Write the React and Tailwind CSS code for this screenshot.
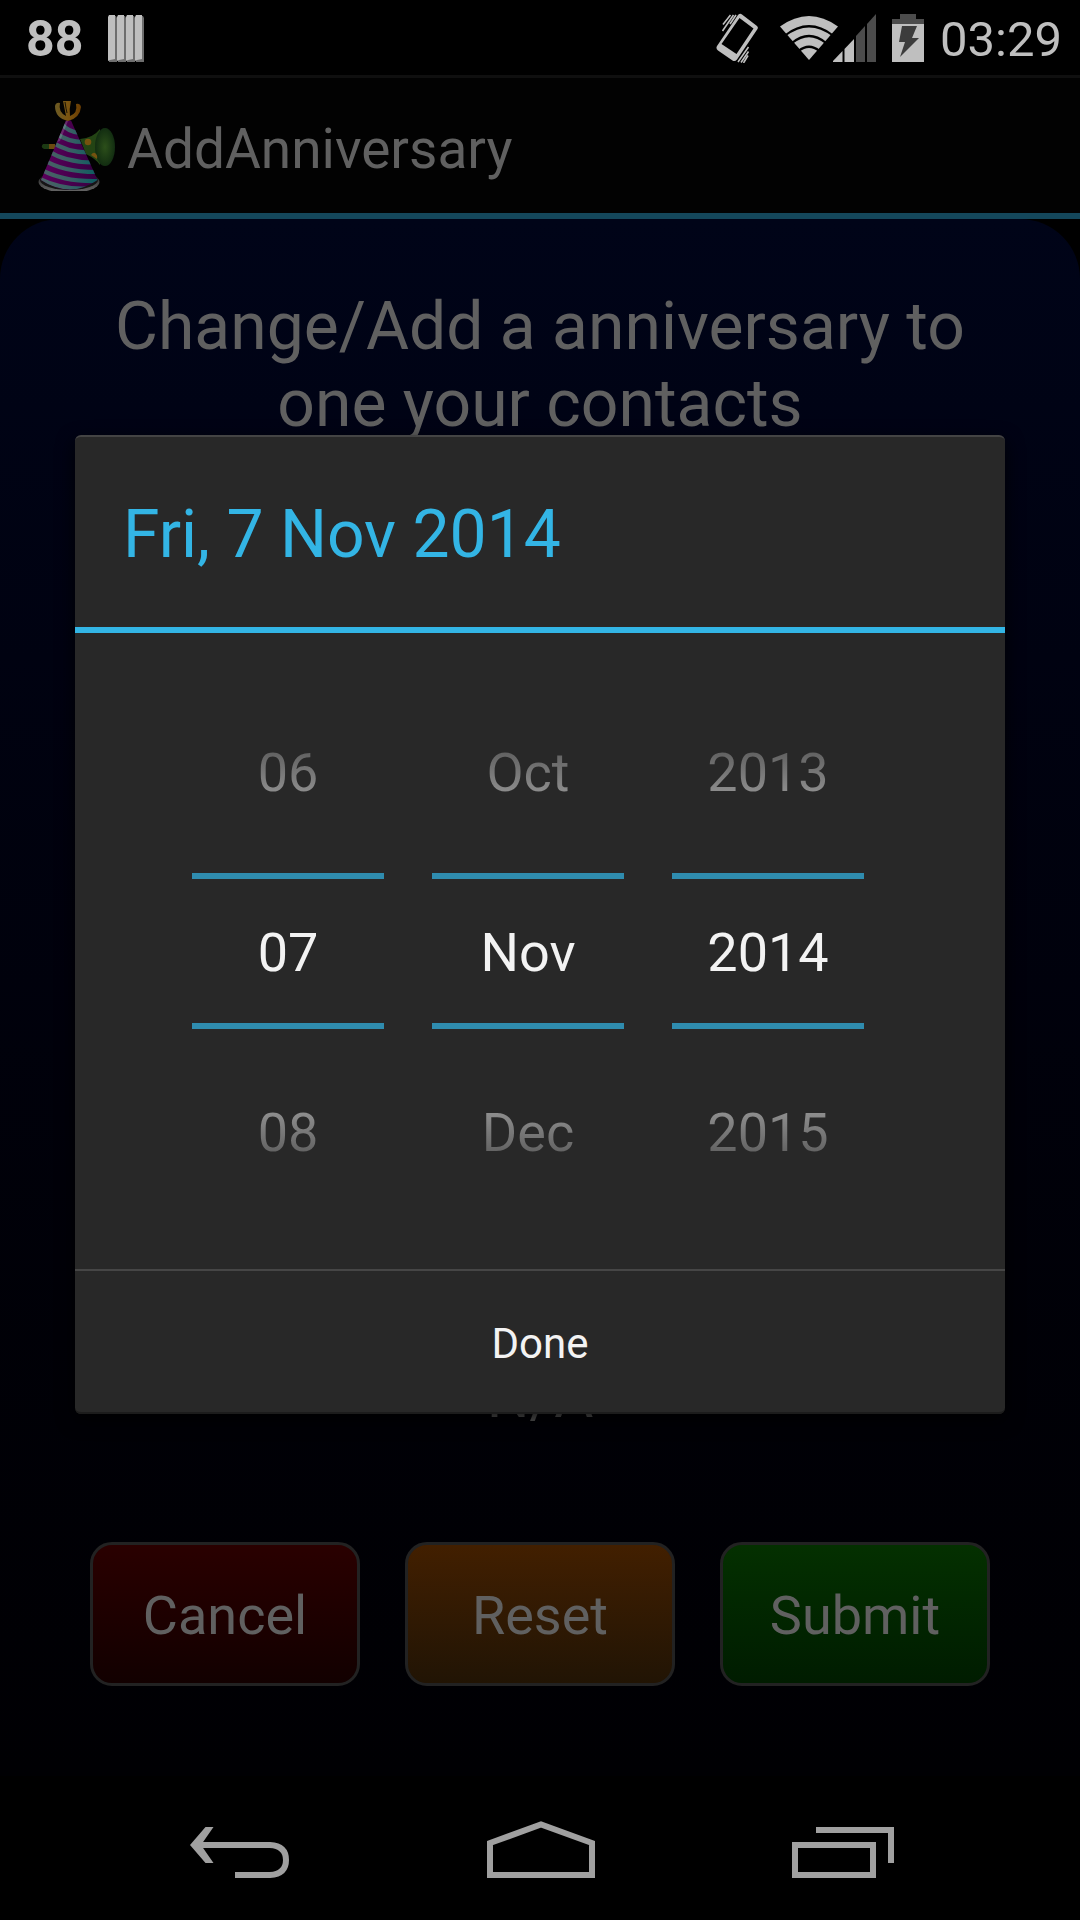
const STATUS = "#bfbfbf";

function MessageIcon() {
  return (
    <svg width="36" height="47" viewBox="0 0 36 47" aria-hidden="true">
      {[0, 9, 18, 27].map((x) => (
        <g key={x}>
          <path d={`M${x + 1} 2l2-1h5l1 2v44h-8z`} fill="#6e6e6e" />
          <path d={`M${x} 2l1-2h6v44l-5 1-2 1z`} fill={STATUS} />
        </g>
      ))}
    </svg>
  );
}

function VibrateIcon() {
  return (
    <svg width="42" height="50" viewBox="0 0 42 50" aria-hidden="true">
      <path
        d="M22 2Q24 0 26 1.500L41 13Q42.500 14.500 41.500 16L21 46.500Q19 49 16.500 47.500L2 37.500Q-.5 35.500 1 33ZM23.500 5L5.500 31 20.500 41 37.500 15.500Z"
        fill={STATUS}
        fillRule="evenodd"
      />
      <path
        d="M14.500 2L7 11.500M17.500 2L6.500 18M20 2L14 11M32.500 34L22 49M32.500 38.500L25 49.500M32 42.500L27.500 50"
        fill="none"
        stroke={STATUS}
        strokeWidth="1.600"
      />
    </svg>
  );
}

function WifiIcon() {
  return (
    <svg width="58" height="44" viewBox="0 0 58 44" aria-hidden="true">
      <path d="M0 10.500Q29-10.500 58 10.500L29 44Z" fill={STATUS} />
      <path d="M5 19.500Q29 1 53 19.500M12 27Q29 13 46 27M18.500 35Q29 26.500 39.500 35" fill="none" stroke="#000" strokeWidth="2.200" />
    </svg>
  );
}

function SignalIcon() {
  return (
    <svg width="43" height="48" viewBox="0 0 43 48" aria-hidden="true">
      <path d="M0 48V47L9.500 37V48Z" fill={STATUS} />
      <path d="M11.500 48V35L21 25V48Z" fill={STATUS} />
      <path d="M23 48V22L32 12V48Z" fill="#4c4c4c" />
      <path d="M34 48V10L43 0V48Z" fill="#4c4c4c" />
    </svg>
  );
}

function BatteryIcon() {
  return (
    <svg width="32" height="48" viewBox="0 0 32 48" aria-hidden="true">
      <path d="M8 0H24V5H32V10H0V5H8Z" fill="#4c4c4c" />
      <path d="M0 10H32V48H0Z" fill={STATUS} />
      <path d="M10 12H25L20 24H27L8 43 13 28H7Z" fill="#3c3c3c" />
    </svg>
  );
}

function PartyHatIcon() {
  return (
    <svg width="78" height="90" viewBox="0 0 78 90" aria-hidden="true">
      <defs>
        <linearGradient id="gold" gradientUnits="userSpaceOnUse" x1="17" y1="0" x2="43" y2="0">
          <stop offset="0" stopColor="#6b5a24" />
          <stop offset=".5" stopColor="#7a5410" />
          <stop offset="1" stopColor="#6a3c02" />
        </linearGradient>
        <linearGradient id="stripe" gradientUnits="userSpaceOnUse" x1="3" y1="0" x2="60" y2="0">
          <stop offset="0" stopColor="#4b6266" />
          <stop offset=".5" stopColor="#396064" />
          <stop offset="1" stopColor="#0a5c60" />
        </linearGradient>
        <linearGradient id="felt" gradientUnits="userSpaceOnUse" x1="3" y1="0" x2="60" y2="0">
          <stop offset="0" stopColor="#5c005c" />
          <stop offset="1" stopColor="#350040" />
        </linearGradient>
        <radialGradient id="horn">
          <stop offset="0" stopColor="#2c4f1a" />
          <stop offset="1" stopColor="#122d11" />
        </radialGradient>
        <linearGradient id="rim" x1="0" x2="0" y1="0" y2="1">
          <stop offset="0" stopColor="#1a1a1a" />
          <stop offset="1" stopColor="#6a6a6a" />
        </linearGradient>
        <clipPath id="cone">
          <path d="M28 19.500h5L59.500 79Q32 98 3 79Z" />
        </clipPath>
      </defs>
      <path d="M5 43h12v5H6q-4-2-1-5z" fill="#1c3a13" />
      <path d="M11 43h6v5h-6z" fill="#6b4a10" />
      <path d="M42 38q13-1 20-10v36q-4-6-14-11z" fill="#234414" />
      <ellipse cx="67" cy="46" rx="10" ry="19" fill="url(#horn)" />
      <circle cx="50" cy="41" r="3.300" fill="#75520f" />
      <path d="M53 54q2-3 4-2 3 2 2 6z" fill="#75520f" />
      <ellipse cx="31" cy="81" rx="30.500" ry="11" fill="url(#rim)" />
      <ellipse cx="31" cy="79" rx="29" ry="10" fill="#151515" />
      <g clipPath="url(#cone)">
        <rect width="78" height="92" fill="url(#felt)" />
        <g fill="none" stroke="url(#stripe)" strokeWidth="4.200">
          <path d="M24 23q6 8 18 9" />
          <path d="M18 32q11 9 28 9" />
          <path d="M14 41q14 10 36 10.500" />
          <path d="M10 50q17 11 44 11.500" />
          <path d="M6 59q19 12 52 12" />
          <path d="M2 68q23 13 58 12" />
          <path d="M-2 76q24 13 52 11.500" />
        </g>
        <path d="M26 18l4 2-8 20-6 2z" fill="#fff" fillOpacity=".16" />
      </g>
      <path d="M17 5Q18 1 22 2 20 11 28 15L25 0h8q-2 8-1 15 8-3 6-12 4-1 5 3-1 11-13 14Q17 17 17 5z" fill="url(#gold)" />
      <path d="M27 1q1 7 2 11" fill="none" stroke="#1a1204" strokeWidth="1" />
    </svg>
  );
}

function BackIcon() {
  return (
    <svg width="100" height="60" viewBox="0 0 100 60" aria-hidden="true">
      <path d="M8 27H80Q96 28 96 42T80 57H45" fill="none" stroke="#a0a0a0" strokeWidth="6" />
      <path d="M0 27L15.500 9H23.500L11 27 23.500 45H15.500Z" fill="#a0a0a0" />
    </svg>
  );
}

function HomeIcon() {
  return (
    <svg width="108" height="60" viewBox="0 0 108 60" fill="none" stroke="#a0a0a0" strokeWidth="6" aria-hidden="true">
      <path d="M3 57V25L54 6.500 105 25V57Z" />
    </svg>
  );
}

function RecentIcon() {
  return (
    <svg width="102" height="60" viewBox="0 0 102 60" fill="none" stroke="#a0a0a0" strokeWidth="6" aria-hidden="true">
      <path d="M3 27H81V57H3Z" />
      <path d="M24 12H99V45" />
    </svg>
  );
}

const columns = [
  { label: "Day", values: ["06", "07", "08"] },
  { label: "Month", values: ["Oct", "Nov", "Dec"] },
  { label: "Year", values: ["2013", "2014", "2015"] },
];

function PickerColumn({ label, values }) {
  const [previous, current, next] = values;
  return (
    <div role="group" aria-label={label} className="flex w-48 flex-col text-[54px] leading-[64px]">
      <button className="mb-[35px] h-[130px] bg-linear-to-b from-[#5c5c5c] from-30% to-[#949494] to-70% bg-clip-text text-transparent">
        {previous}
      </button>
      <div className="flex h-[156px] items-center justify-center border-y-6 border-[#2f8cae] pt-1 text-[#f3f3f3]">
        {current}
      </div>
      <button className="mt-[39px] h-[130px] bg-linear-to-b from-[#949494] from-30% to-[#5c5c5c] to-70% bg-clip-text text-transparent">
        {next}
      </button>
    </div>
  );
}

const actions = [
  { label: "Cancel", tone: "from-[#2a0000] to-[#120000]" },
  { label: "Reset", tone: "from-[#421f00] to-[#211404]" },
  { label: "Submit", tone: "from-[#043000] to-[#001c00]" },
];

export default function App() {
  return (
    <div className="relative flex min-h-screen flex-col bg-black font-[Roboto,sans-serif]">
      <header>
        <div className="flex h-[75px] items-center justify-between pr-[18px] pl-[26px] text-[#bfbfbf]">
          <div className="flex items-center gap-[25px] pt-0.5">
            <span className="text-[50px] leading-[60px] font-bold">88</span>
            <MessageIcon />
          </div>
          <div className="flex items-center">
            <div className="flex items-center">
              <VibrateIcon />
              <span className="ml-[22px]"><WifiIcon /></span>
              <span className="-ml-[5px]"><SignalIcon /></span>
              <span className="ml-4"><BatteryIcon /></span>
            </div>
            <time className="ml-4 pt-1 text-[49px] leading-[60px]">03:29</time>
          </div>
        </div>
        <div className="flex h-36 items-center border-t-3 border-b-6 border-t-[#0f0f0f] border-b-[#14475b] bg-[#020202] pl-[38px] text-[#606060]">
          <PartyHatIcon />
          <h1 className="ml-[11px] pt-1.5 text-[55px] leading-[64px]">AddAnniversary</h1>
        </div>
      </header>

      <main className="flex flex-1 flex-col rounded-t-[60px] bg-linear-to-b from-[#000418] to-[#000003] px-[90px] pt-[69px]">
        <h2 className="text-center text-[66px] leading-[77px] text-[#606060]">
          Change/Add a anniversary to one your contacts
        </h2>
        <p className="mt-auto text-center text-[60px] leading-[70px] text-[#606060]">N/A</p>
        <div className="mt-[110px] mb-[90px] grid grid-cols-3 gap-[45px]">
          {actions.map(({ label, tone }) => (
            <button
              key={label}
              className={`h-36 rounded-[22px] border-3 border-[#222] bg-linear-to-b pt-1 text-[54px] leading-[64px] text-[#606060] ${tone}`}
            >
              {label}
            </button>
          ))}
        </div>
      </main>

      <nav className="flex h-36 items-center justify-between bg-black pr-[186px] pl-[190px]">
        <button aria-label="Back"><BackIcon /></button>
        <button aria-label="Home"><HomeIcon /></button>
        <button aria-label="Recent apps"><RecentIcon /></button>
      </nav>

      <div
        role="dialog"
        aria-labelledby="date-title"
        className="absolute inset-x-[75px] top-[435px] flex flex-col rounded-md border-t-2 border-[#444] bg-[#282828] shadow-[0_6px_18px_rgba(0,0,0,0.8)]"
      >
        <h2 id="date-title" className="border-b-6 border-[#33b5e5] px-12 pt-[60px] pb-[54px] text-[66px] leading-[76px] text-[#33b5e5]">
          Fri, 7 Nov 2014
        </h2>
        <div className="flex justify-center gap-12 pt-[75px] pr-6 pb-[71px]">
          {columns.map((column) => (
            <PickerColumn key={column.label} {...column} />
          ))}
        </div>
        <button className="h-[145px] rounded-b-md border-t-2 border-b-2 border-t-[#464646] border-b-[#1c1c1c] pt-1 text-[42px] leading-[50px] text-[#f3f3f3]">
          Done
        </button>
      </div>
    </div>
  );
}
